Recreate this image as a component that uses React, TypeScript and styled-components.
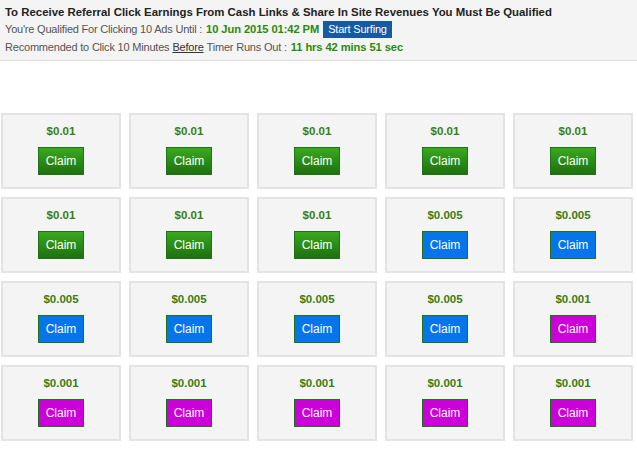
import React from 'react';
import styled, {createGlobalStyle} from 'styled-components';

const GlobalStyle = createGlobalStyle`
    body {
        margin: 0;
        background: #fff;
        font-family: "Liberation Sans", Arial, sans-serif;
    }
`

const Header = styled.header`
    height: 61px;
    box-sizing: border-box;
    padding: 5px 5px 0 5px;
    background-color: #f4f4f4;
    border-bottom: 1px solid #dddddd;
    font-size: 11px;
    letter-spacing: -0.2px;
    color: #555;
`

const Title = styled.div`
    height: 15px;
    line-height: 15px;
    font-size: 11.4px;
    letter-spacing: 0;
    font-weight: bold;
    color: #222;
`

const Line = styled.div`
    height: 18px;
    display: flex;
    align-items: center;
    white-space: nowrap;
`

const Green = styled.b`
    margin-left: 4px;
    font-size: 11.2px;
    letter-spacing: -0.1px;
    color: #2b8a0c;
`

const Before = styled.span`
    margin: 0 3px;
    color: #333;
    text-decoration: underline;
`

const SurfButton = styled.button`
    height: 17px;
    margin-left: 4px;
    padding: 0 5px;
    border: none;
    background-color: #155ba3;
    color: #fff;
    font-family: inherit;
    font-size: 11px;
    letter-spacing: -0.2px;
`

const Grid = styled.div`
    margin: 52px 0 0 1px;
    display: grid;
    grid-template-columns: repeat(5, 120px);
    gap: 8px;
`

const Card = styled.div`
    height: 76px;
    box-sizing: border-box;
    padding-top: 9px;
    display: flex;
    flex-direction: column;
    align-items: center;
    background-color: #f4f4f4;
    border: 2px solid #e3e3e3;
`

const Price = styled.div`
    font-size: 11.5px;
    font-weight: bold;
    color: #3a7d12;
    line-height: 14px;
`

type Tier = 'green' | 'blue' | 'purple'

const fills: Record<Tier, string> = {
    green: 'linear-gradient(#3aa81d, #1e7010)',
    blue: '#0874ea',
    purple: '#cc00d8',
}

const Claim = styled.button<{$tier: Tier}>`
    width: 46px;
    height: 28px;
    margin-top: 9px;
    padding: 0;
    border: 1px solid #1f7315;
    background: ${({$tier}) => fills[$tier]};
    color: #fff;
    font-family: inherit;
    font-size: 12px;
`

const ads: {price: string, tier: Tier}[] = [
    ...Array(8).fill({price: '$0.01', tier: 'green'}),
    ...Array(6).fill({price: '$0.005', tier: 'blue'}),
    ...Array(6).fill({price: '$0.001', tier: 'purple'}),
]

function App() {
    return (
        <>
            <GlobalStyle/>
            <Header>
                <Title>To Receive Referral Click Earnings From Cash Links &amp; Share In Site Revenues You Must Be Qualified</Title>
                <Line>
                    You're Qualified For Clicking 10 Ads Until :
                    <Green>10 Jun 2015 01:42 PM</Green>
                    <SurfButton>Start Surfing</SurfButton>
                </Line>
                <Line>
                    Recommended to Click 10 Minutes<Before>Before</Before>Timer Runs Out :
                    <Green>11 hrs 42 mins 51 sec</Green>
                </Line>
            </Header>
            <Grid>
                {ads.map((ad, i) => (
                    <Card key={i}>
                        <Price>{ad.price}</Price>
                        <Claim $tier={ad.tier}>Claim</Claim>
                    </Card>
                ))}
            </Grid>
        </>
    );
}

export default App;
